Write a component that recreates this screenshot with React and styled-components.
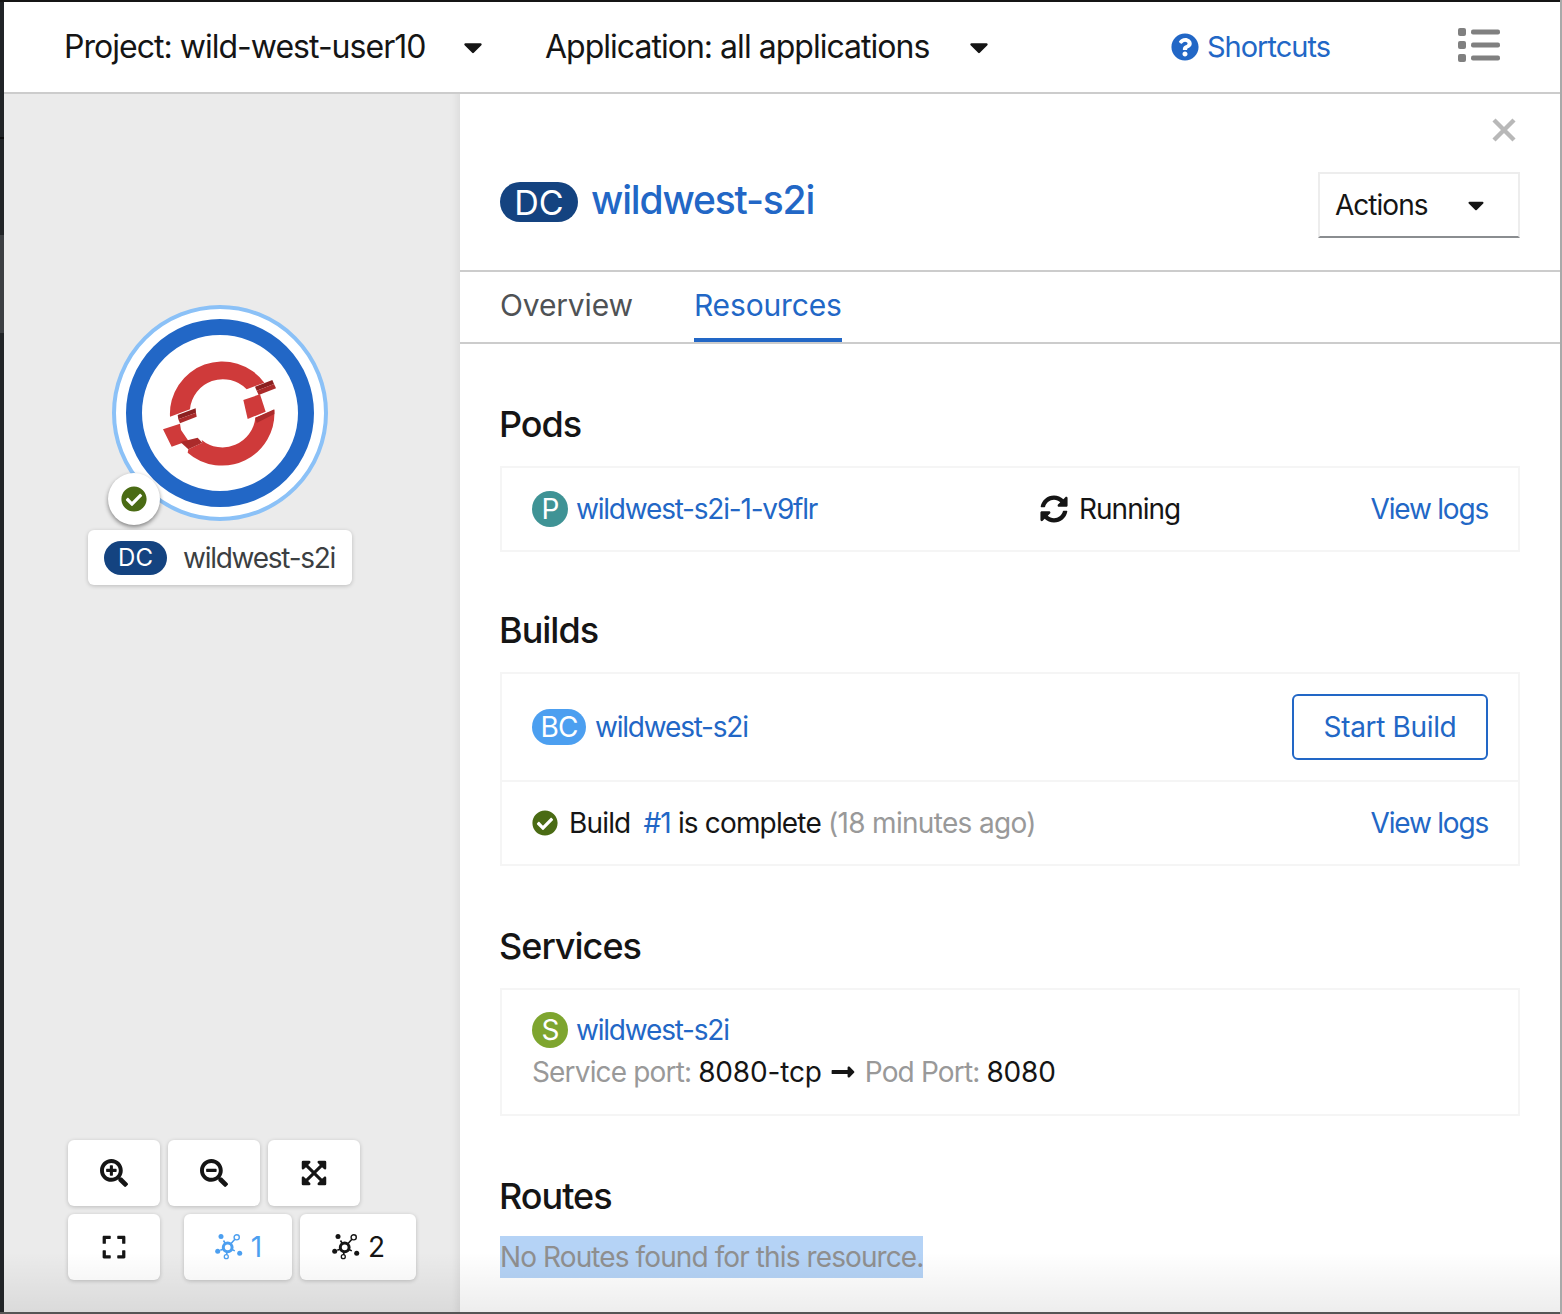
import styled, { createGlobalStyle } from "styled-components"
import {
    FaCaretDown,
    FaCheckCircle,
    FaExpand,
    FaExpandArrowsAlt,
    FaLongArrowAltRight,
    FaQuestionCircle,
    FaSearchMinus,
    FaSearchPlus,
    FaSyncAlt,
} from "react-icons/fa"

const BLUE = "#2267c6"

function TopologyIcon() {
    return (
        <svg width="28" height="26" viewBox="0 0 28 26" fill="none" stroke="currentColor">
            <path d="M8.5 6.5 L12.7 13.3 M21.7 3.3 L12.7 13.3 M5.3 16.3 L12.7 13.3 M19.8 16.9 L12.7 13.3 M11.3 22.7 L12.7 13.3" strokeWidth="1.6" />
            <circle cx="12.7" cy="13.3" r="4.4" strokeWidth="3" fill="#fff" />
            <circle cx="6" cy="2.5" r="2.5" fill="currentColor" stroke="none" />
            <circle cx="2.7" cy="17.3" r="2.5" fill="currentColor" stroke="none" />
            <circle cx="24.7" cy="19.3" r="2.5" fill="currentColor" stroke="none" />
            <circle cx="21.7" cy="3.3" r="2.6" strokeWidth="1.4" fill="#fff" />
            <circle cx="11.3" cy="22.7" r="2" strokeWidth="1.3" fill="#fff" />
        </svg>
    )
}

function ListIcon() {
    return (
        <svg width="42" height="34" viewBox="0 0 42 34" fill="#808080">
            <rect x="0" y="0" width="8" height="8" rx="2" />
            <rect x="0" y="13" width="8" height="8" rx="2" />
            <rect x="0" y="26" width="8" height="8" rx="2" />
            <rect x="13" y="1.5" width="29" height="5" rx="2" />
            <rect x="13" y="14.5" width="29" height="5" rx="2" />
            <rect x="13" y="27.5" width="29" height="5" rx="2" />
        </svg>
    )
}

function CloseIcon() {
    return (
        <svg width="24" height="24" viewBox="0 0 24 24" stroke="#b8b8b8" strokeWidth="4.4">
            <path d="M2 2 L22 22 M22 2 L2 22" />
        </svg>
    )
}

function OpenShiftLogo() {
    return (
        <svg width="130" height="125" viewBox="0 0 390 375">
            <path fill="#cf3a3a" d="M45 200 A157 157 0 0 1 328 98 L275 118 A99 99 0 0 0 105 178 Z" />
            <path fill="#cf3a3a" d="M358 180 A157 157 0 0 1 98 308 L100 298 L142 278 L140 270 A99 99 0 0 0 301 203 Z" />
            <path fill="#cf3a3a" d="M265 150 L315 133 L332 185 L278 207 Z" />
            <path fill="#cf3a3a" d="M24 238 L75 221 L78 240 L100 272 L50 290 Z" />
            <path fill="#8c2020" d="M300 110 L352 90 L357 102 L305 122 Z" />
            <path fill="#ab2b2b" d="M305 122 L357 102 L363 115 L311 135 Z" />
            <path fill="#8c2020" d="M68 195 L122 175 L123 188 L70 208 Z" />
            <path fill="#ab2b2b" d="M70 208 L123 188 L125 200 L75 220 Z" />
            <path fill="#ab2b2b" d="M301 203 L358 178 L358 192 L305 219 Z" />
            <path fill="#ab2b2b" d="M76 276 L128 263 L142 278 L100 298 Z" />
        </svg>
    )
}

export default function App() {
    return (
        <Page>
            <GlobalStyle />
            <TopBar>
                <Selector $width={424} $gap={57}>
                    <span>Project: wild-west-user10</span>
                    <Caret />
                </Selector>
                <Selector $width={449}>
                    <span>Application: all applications</span>
                    <Caret />
                </Selector>
                <Shortcuts>
                    <FaQuestionCircle size={28} />
                    Shortcuts
                </Shortcuts>
                <ListSlot>
                    <ListIcon />
                </ListSlot>
            </TopBar>
            <Main>
                <Canvas>
                    <Node>
                        <Ring>
                            <BlueRing>
                                <OpenShiftLogo />
                            </BlueRing>
                        </Ring>
                        <StatusBadge>
                            <FaCheckCircle size={26} color="#4a6b14" />
                        </StatusBadge>
                        <NodeLabel>
                            <NodePill>DC</NodePill>
                            <NodeName>wildwest-s2i</NodeName>
                        </NodeLabel>
                    </Node>
                    <Controls>
                        <ControlRow>
                            <ControlButton><FaSearchPlus size={28} /></ControlButton>
                            <ControlButton><FaSearchMinus size={28} /></ControlButton>
                            <ControlButton><FaExpandArrowsAlt size={28} /></ControlButton>
                        </ControlRow>
                        <ControlRow>
                            <ControlButton><FaExpand size={26} /></ControlButton>
                            <LegendGroup>
                                <ControlButton $width={108} $active>
                                    <TopologyIcon /> 1
                                </ControlButton>
                                <ControlButton $width={116}>
                                    <TopologyIcon /> 2
                                </ControlButton>
                            </LegendGroup>
                        </ControlRow>
                    </Controls>
                </Canvas>
                <Panel>
                    <PanelHead>
                        <CloseButton><CloseIcon /></CloseButton>
                        <TitleRow>
                            <TitlePill>DC</TitlePill>
                            <Title>wildwest-s2i</Title>
                        </TitleRow>
                        <ActionsToggle>
                            Actions
                            <ActionsCaret />
                        </ActionsToggle>
                    </PanelHead>
                    <Tabs>
                        <Tab>Overview</Tab>
                        <Tab $active>Resources</Tab>
                    </Tabs>
                    <Body>
                        <Section>
                            <Heading>Pods</Heading>
                            <Card>
                                <PodRow>
                                    <Named>
                                        <Badge $color="#3f9395">P</Badge>
                                        <Link>wildwest-s2i-1-v9flr</Link>
                                    </Named>
                                    <Status>
                                        <FaSyncAlt size={28} />
                                        Running
                                    </Status>
                                    <Logs>View logs</Logs>
                                </PodRow>
                            </Card>
                        </Section>
                        <Section $top={56}>
                            <Heading>Builds</Heading>
                            <Card>
                                <BuildRow $height={108} $divided>
                                    <Named>
                                        <Badge $color="#4c9ff0" $wide>BC</Badge>
                                        <Link>wildwest-s2i</Link>
                                    </Named>
                                    <OutlineButton>Start Build</OutlineButton>
                                </BuildRow>
                                <BuildRow $height={82}>
                                    <BuildStatus>
                                        <FaCheckCircle size={26} color="#4a6b14" />
                                        <BuildText>
                                            Build <BuildNumber>#1</BuildNumber> is complete <Muted>(18 minutes ago)</Muted>
                                        </BuildText>
                                    </BuildStatus>
                                    <Link>View logs</Link>
                                </BuildRow>
                            </Card>
                        </Section>
                        <Section>
                            <Heading>Services</Heading>
                            <ServiceCard>
                                <Named>
                                    <Badge $color="#7ea52f">S</Badge>
                                    <Link>wildwest-s2i</Link>
                                </Named>
                                <PortLine>
                                    <PortLabel>Service port:</PortLabel>
                                    <PortValue>8080-tcp</PortValue>
                                    <PortArrow />
                                    <PortLabel>Pod Port:</PortLabel>
                                    <PortValue>8080</PortValue>
                                </PortLine>
                            </ServiceCard>
                        </Section>
                        <Section $inner={18}>
                            <Heading>Routes</Heading>
                            <EmptyNote><span>No Routes found for this resource.</span></EmptyNote>
                        </Section>
                    </Body>
                </Panel>
                <BottomFade />
            </Main>
        </Page>
    )
}

const GlobalStyle = createGlobalStyle`
    html, body {
        margin: 0;
        padding: 0;
    }
    * {
        box-sizing: border-box;
    }
    body {
        font-family: "Inter", "Noto Sans", sans-serif;
        font-size: 28px;
        letter-spacing: -0.035em;
        color: #151515;
    }
`
const Page = styled.div`
    display: flex;
    flex-direction: column;
    width: 1562px;
    height: 1314px;
    overflow: hidden;
    padding: 2px 0 2px 4px;
    border-right: 2px solid #A9A9A9;
    background: linear-gradient(
        to bottom,
        #151515 0 2px,
        #212427 2px 137px,
        #0d0d0d 137px 139px,
        #212427 139px 235px,
        #3C3F42 235px 333px,
        #212427 333px 1312px,
        #555555 1312px
    );
`
const TopBar = styled.div`
    display: flex;
    align-items: center;
    flex: 0 0 92px;
    padding: 0 60px 1px 60px;
    background: #FFFFFF;
    border-bottom: 2px solid #CCCCCC;
    font-size: 32px;
`
const Selector = styled.div`
    display: flex;
    align-items: center;
    justify-content: space-between;
    width: ${(p) => p.$width}px;
    margin-right: ${(p) => p.$gap || 0}px;
`
const Caret = styled(FaCaretDown)`
    width: 30px;
    height: 30px;
`
const Shortcuts = styled.div`
    display: flex;
    align-items: center;
    gap: 8px;
    margin-left: auto;
    margin-right: 128px;
    color: ${BLUE};
    font-size: 29px;
`
const ListSlot = styled.div`
    display: flex;
    margin-bottom: 3px;
`
const Main = styled.div`
    position: relative;
    display: flex;
    flex: 1;
    min-height: 0;
`
const Canvas = styled.div`
    position: relative;
    display: flex;
    flex-direction: column;
    justify-content: flex-end;
    flex: 0 0 456px;
    padding: 0 0 32px 64px;
    background: #EBEBEB;
    box-shadow: inset -12px 0 10px -10px rgba(0, 0, 0, 0.08);
`
const Node = styled.div`
    position: absolute;
    left: 84px;
    top: 211px;
    width: 264px;
    height: 280px;
`
const Ring = styled.div`
    position: absolute;
    left: 24px;
    top: 0;
    display: flex;
    align-items: center;
    justify-content: center;
    width: 216px;
    height: 216px;
    border-radius: 50%;
    background: #FFFFFF;
    border: 4px solid #8BC1F7;
`
const BlueRing = styled.div`
    display: flex;
    align-items: center;
    justify-content: center;
    width: 188px;
    height: 188px;
    padding-bottom: 2px;
    border-radius: 50%;
    background: #FFFFFF;
    border: 16px solid ${BLUE};
`
const StatusBadge = styled.div`
    position: absolute;
    left: 20px;
    top: 168px;
    display: flex;
    align-items: center;
    justify-content: center;
    width: 52px;
    height: 52px;
    border-radius: 50%;
    background: #FFFFFF;
    box-shadow: 0 2px 4px rgba(0, 0, 0, 0.45);
`
const NodeLabel = styled.div`
    position: absolute;
    left: 0;
    top: 225px;
    display: flex;
    align-items: center;
    gap: 16px;
    width: 264px;
    height: 55px;
    padding-left: 16px;
    border-radius: 6px;
    background: #FFFFFF;
    box-shadow: 0 1px 4px rgba(0, 0, 0, 0.2);
    color: #3c3f42;
`
const NodeName = styled.span`
    letter-spacing: -0.045em;
`
const NodePill = styled.div`
    display: flex;
    align-items: center;
    justify-content: center;
    width: 63px;
    height: 34px;
    border-radius: 17px;
    background: #144380;
    color: #FFFFFF;
    font-size: 24px;
    letter-spacing: 0;
`
const Controls = styled.div`
    display: flex;
    flex-direction: column;
    gap: 8px;
`
const ControlRow = styled.div`
    display: flex;
    gap: 8px;
`
const LegendGroup = styled.div`
    display: flex;
    gap: 8px;
    margin-left: 16px;
`
const ControlButton = styled.div`
    display: flex;
    align-items: center;
    justify-content: center;
    gap: 8px;
    width: ${(p) => p.$width || 92}px;
    height: 66px;
    border-radius: 6px;
    background: #FFFFFF;
    box-shadow: 0 1px 4px rgba(0, 0, 0, 0.2);
    color: ${(p) => (p.$active ? "#4c9ff0" : "#151515")};
`
const Panel = styled.div`
    display: flex;
    flex-direction: column;
    flex: 1;
    min-width: 0;
    background: #FFFFFF;
`
const PanelHead = styled.div`
    position: relative;
    display: flex;
    align-items: center;
    justify-content: space-between;
    padding: 78px 40px 32px 40px;
`
const CloseButton = styled.div`
    position: absolute;
    top: 24px;
    right: 44px;
    display: flex;
`
const TitleRow = styled.div`
    display: flex;
    align-items: center;
    gap: 13px;
    margin-bottom: 6px;
`
const TitlePill = styled.div`
    display: flex;
    align-items: center;
    justify-content: center;
    width: 78px;
    height: 40px;
    border-radius: 20px;
    background: #144380;
    color: #FFFFFF;
    font-size: 34px;
    letter-spacing: 0;
`
const Title = styled.h1`
    margin: 0 0 5px 0;
    color: ${BLUE};
    font-size: 39px;
    font-weight: 500;
    letter-spacing: -0.03em;
`
const ActionsToggle = styled.div`
    display: flex;
    align-items: center;
    justify-content: space-between;
    width: 202px;
    height: 66px;
    padding: 0 29px 0 15px;
    border: 2px solid #EDEDED;
    border-bottom-color: #8A8D90;
`
const ActionsCaret = styled(FaCaretDown)`
    width: 26px;
    height: 26px;
`
const Tabs = styled.div`
    display: flex;
    gap: 61px;
    height: 74px;
    padding-left: 40px;
    border-top: 2px solid #CCCCCC;
    border-bottom: 2px solid #CCCCCC;
`
const Tab = styled.div`
    display: flex;
    align-items: center;
    height: 70px;
    border-bottom: 4px solid ${(p) => (p.$active ? BLUE : "transparent")};
    color: ${(p) => (p.$active ? BLUE : "#4F5255")};
    font-size: 30px;
    letter-spacing: -0.005em;
`
const Body = styled.div`
    padding: 0 40px;
`
const Section = styled.section`
    display: flex;
    flex-direction: column;
    gap: ${(p) => p.$inner || 20}px;
    margin-top: ${(p) => p.$top || 58}px;
`
const Heading = styled.h2`
    margin: 0 0 0 -1px;
    font-size: 36px;
    line-height: 44px;
    font-weight: 500;
    letter-spacing: -0.028em;
`
const Card = styled.div`
    border: 2px solid #F5F5F5;
`
const PodRow = styled.div`
    display: grid;
    grid-template-columns: 508px auto 1fr;
    align-items: center;
    height: 82px;
    padding: 0 30px;
`
const Named = styled.div`
    display: flex;
    align-items: center;
    gap: 8px;
`
const Badge = styled.div`
    display: flex;
    align-items: center;
    justify-content: center;
    width: ${(p) => (p.$wide ? 54 : 36)}px;
    height: 36px;
    margin-right: ${(p) => (p.$wide ? 1 : 0)}px;
    border-radius: 18px;
    background: ${(p) => p.$color};
    color: #FFFFFF;
`
const Link = styled.a`
    color: ${BLUE};
    letter-spacing: -0.043em;
`
const Logs = styled(Link)`
    justify-self: end;
`
const Status = styled.div`
    display: flex;
    align-items: center;
    gap: 11px;
`
const BuildRow = styled.div`
    display: flex;
    align-items: center;
    justify-content: space-between;
    height: ${(p) => p.$height}px;
    padding: 0 30px;
    border-bottom: ${(p) => (p.$divided ? "2px solid #F5F5F5" : "none")};
`
const OutlineButton = styled.div`
    display: flex;
    align-items: center;
    justify-content: center;
    width: 196px;
    height: 66px;
    border: 2px solid ${BLUE};
    border-radius: 6px;
    color: ${BLUE};
    letter-spacing: -0.012em;
`
const BuildStatus = styled.div`
    display: flex;
    align-items: center;
    gap: 11px;
`
const BuildText = styled.span`
    white-space: pre-wrap;
    letter-spacing: -0.03em;
`
const BuildNumber = styled.span`
    margin-left: 6px;
    color: ${BLUE};
`
const Muted = styled.span`
    color: #999999;
    letter-spacing: -0.024em;
`
const ServiceCard = styled(Card)`
    height: 128px;
    padding: 22px 30px 0 30px;
`
const PortLine = styled.div`
    display: flex;
    align-items: center;
    gap: 7px;
    height: 40px;
    margin-top: 4px;
`
const PortLabel = styled.span`
    color: #999999;
    letter-spacing: -0.03em;
`
const PortValue = styled.span`
    letter-spacing: -0.006em;
`
const PortArrow = styled(FaLongArrowAltRight)`
    width: 26px;
    height: 26px;
    margin: 0 2px 0 1px;
`
const EmptyNote = styled.div`
    display: flex;
    span {
        display: block;
        height: 42px;
        line-height: 42px;
        background: #B5D3F6;
        color: #8F8F8F;
        letter-spacing: -0.032em;
    }
`
const BottomFade = styled.div`
    position: absolute;
    left: 0;
    right: 0;
    bottom: 0;
    height: 60px;
    background: linear-gradient(to bottom, rgba(0, 0, 0, 0), rgba(0, 0, 0, 0.07));
    pointer-events: none;
`
